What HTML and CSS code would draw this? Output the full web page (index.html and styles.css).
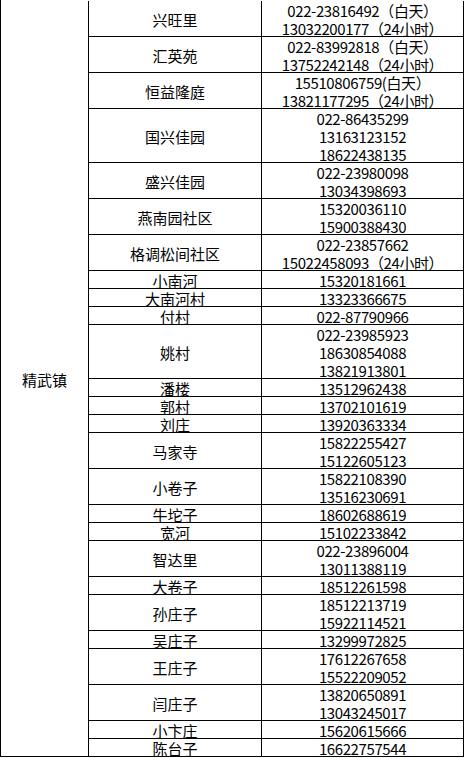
FILE: index.html
```html
<!DOCTYPE html>
<html lang="zh-CN">
<head>
<meta charset="utf-8">
<title>精武镇</title>
<link rel="stylesheet" href="styles.css">
</head>
<body>
<div class="sheet">
  <div class="cell town">精武镇</div>
  <div class="cell name h2">兴旺里</div><div class="cell tel h2">022-23816492（白天）<br>13032200177（24小时）</div>
  <div class="cell name h2">汇英苑</div><div class="cell tel h2">022-83992818（白天）<br>13752242148（24小时）</div>
  <div class="cell name h2">恒益隆庭</div><div class="cell tel h2">15510806759(白天）<br>13821177295（24小时）</div>
  <div class="cell name h3">国兴佳园</div><div class="cell tel h3">022-86435299<br>13163123152<br>18622438135</div>
  <div class="cell name h2">盛兴佳园</div><div class="cell tel h2">022-23980098<br>13034398693</div>
  <div class="cell name h2">燕南园社区</div><div class="cell tel h2">15320036110<br>15900388430</div>
  <div class="cell name h2">格调松间社区</div><div class="cell tel h2">022-23857662<br>15022458093（24小时）</div>
  <div class="cell name h1">小南河</div><div class="cell tel h1">15320181661</div>
  <div class="cell name h1">大南河村</div><div class="cell tel h1">13323366675</div>
  <div class="cell name h1">付村</div><div class="cell tel h1">022-87790966</div>
  <div class="cell name h3">姚村</div><div class="cell tel h3">022-23985923<br>18630854088<br>13821913801</div>
  <div class="cell name h1">潘楼</div><div class="cell tel h1">13512962438</div>
  <div class="cell name h1">郭村</div><div class="cell tel h1">13702101619</div>
  <div class="cell name h1">刘庄</div><div class="cell tel h1">13920363334</div>
  <div class="cell name h2">马家寺</div><div class="cell tel h2">15822255427<br>15122605123</div>
  <div class="cell name h2">小卷子</div><div class="cell tel h2">15822108390<br>13516230691</div>
  <div class="cell name h1">牛坨子</div><div class="cell tel h1">18602688619</div>
  <div class="cell name h1">宽河</div><div class="cell tel h1">15102233842</div>
  <div class="cell name h2">智达里</div><div class="cell tel h2">022-23896004<br>13011388119</div>
  <div class="cell name h1">大卷子</div><div class="cell tel h1">18512261598</div>
  <div class="cell name h2">孙庄子</div><div class="cell tel h2">18512213719<br>15922114521</div>
  <div class="cell name h1">吴庄子</div><div class="cell tel h1">13299972825</div>
  <div class="cell name h2">王庄子</div><div class="cell tel h2">17612267658<br>15522209052</div>
  <div class="cell name h2">闫庄子</div><div class="cell tel h2">13820650891<br>13043245017</div>
  <div class="cell name h1">小卞庄</div><div class="cell tel h1">15620615666</div>
  <div class="cell name h1">陈台子</div><div class="cell tel h1">16622757544</div>
</div>
</body>
</html>
```
FILE: styles.css
```css
html, body {
  margin: 0;
  padding: 0;
  background: #ffffff;
}

.sheet {
  display: grid;
  grid-template-columns: 88px 173px 202px;
  width: 464px;
  box-sizing: border-box;
  padding-top: 1px;
  border-left: 1px solid #000;
  font-family: "Noto Sans CJK SC", "Noto Sans", sans-serif;
  font-size: 15px;
  line-height: 18px;
  color: #000;
}

.cell {
  box-sizing: border-box;
  display: flex;
  flex-direction: column;
  justify-content: center;
  align-items: center;
  text-align: center;
  white-space: nowrap;
  padding-top: 2px;
  border-right: 1px solid #000;
  border-bottom: 1px solid #000;
}

.town {
  grid-column: 1;
  grid-row: 1 / span 26;
}

.name {
  grid-column: 2;
}

.tel {
  grid-column: 3;
  letter-spacing: -0.4px;
}

.h1 { height: 18px; }
.h2 { height: 36px; }
.h3 { height: 54px; }
```
